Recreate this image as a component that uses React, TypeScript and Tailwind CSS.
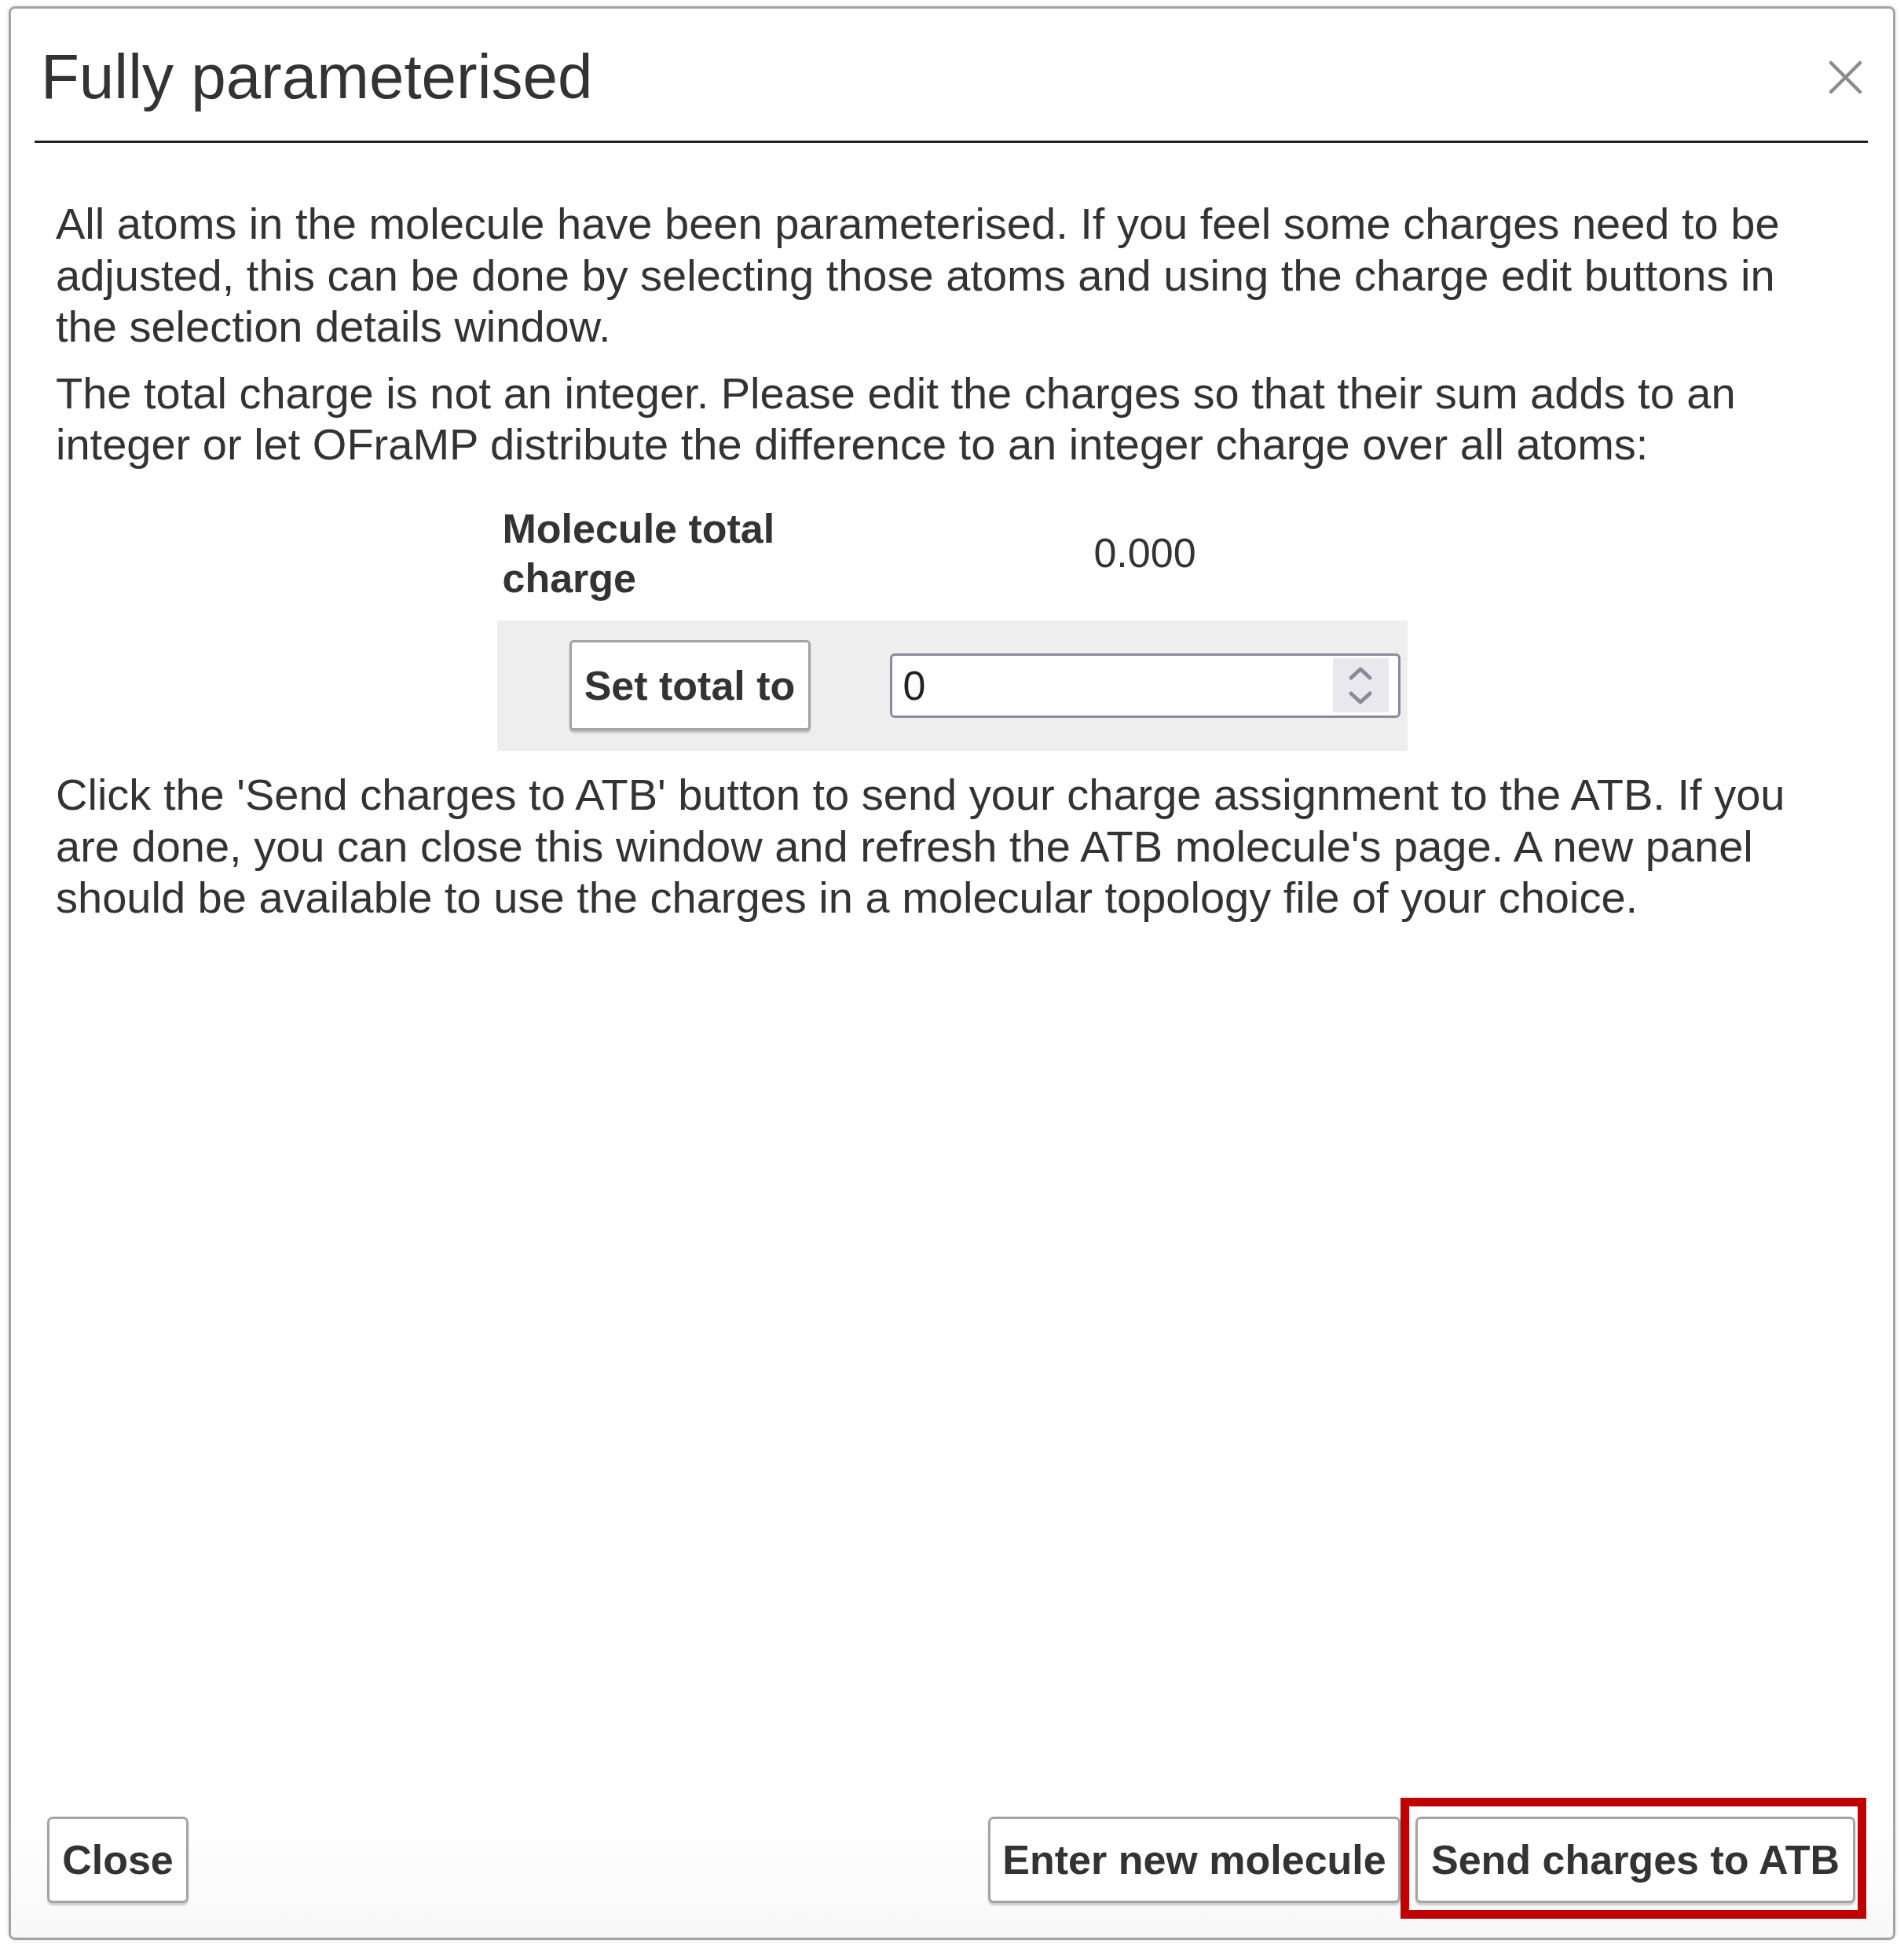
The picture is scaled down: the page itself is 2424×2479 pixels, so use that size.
import { useState } from 'react';

const CloseIcon = () => (
    <svg width="43" height="43" viewBox="0 0 43 43" fill="none">
        <path d="M3 3 L40 40 M40 3 L3 40" stroke="#8c8c8c" strokeWidth="4.5" strokeLinecap="round" />
    </svg>
);

const Spinner = () => (
    <div className="w-[71px] h-[69px] bg-[#e9e9ed] flex items-center justify-center">
        <svg width="32" height="50" viewBox="0 0 32 50" fill="none">
            <path d="M4 15 L16 4 L28 15" stroke="#8a8a9a" strokeWidth="5" strokeLinecap="round" strokeLinejoin="round" />
            <path d="M4 35 L16 46 L28 35" stroke="#8a8a9a" strokeWidth="5" strokeLinecap="round" strokeLinejoin="round" />
        </svg>
    </div>
);

const DialogButton = ({ label, width }: { label: string; width: string }) => (
    <button
        className={`${width} h-[110px] bg-white border-[3px] border-[#a4a4a4] rounded-[7px] shadow-[0_3px_2px_rgba(0,0,0,0.18)] text-[52px] font-bold text-[#333] leading-none whitespace-nowrap flex items-center justify-center`}
    >
        {label}
    </button>
);

export default function App() {
    const [total, setTotal] = useState('0');

    return (
        <div className="w-[2424px] h-[2479px] bg-white pt-[8px] px-[11px] text-[#333] font-['Liberation_Sans',Arial,sans-serif]">
            <div className="h-[2462px] border-[3px] border-[#a3a3a3] rounded-[8px] shadow-[0_0_6px_rgba(0,0,0,0.12)] flex flex-col overflow-hidden">
                {/* title bar */}
                <div className="ml-[30px] mr-[32px] pt-[39px] pb-[33px] border-b-[3px] border-[#222] flex items-center justify-between">
                    <h1 className="pl-[8px] text-[80px] leading-[96px] font-normal text-[#333]">Fully parameterised</h1>
                    <button className="mr-[7px]">
                        <CloseIcon />
                    </button>
                </div>

                {/* body */}
                <div className="pl-[57px] pt-[70px] text-[56px] leading-[65.6px] whitespace-nowrap">
                    <p className="mb-[19px]">
                        All atoms in the molecule have been parameterised. If you feel some charges need to be<br />
                        adjusted, this can be done by selecting those atoms and using the charge edit buttons in<br />
                        the selection details window.
                    </p>
                    <p>
                        The total charge is not an integer. Please edit the charges so that their sum adds to an<br />
                        integer or let OFraMP distribute the difference to an integer charge over all atoms:
                    </p>
                </div>

                <div className="w-[1159px] self-center mt-[36px] text-[52px] leading-[63px]">
                    <div className="grid grid-cols-[491px_668px] items-center pt-[7px] pb-[22px]">
                        <div className="pl-[7px] font-bold">Molecule total<br />charge</div>
                        <div className="text-center">0.000</div>
                    </div>
                    <div className="grid grid-cols-[491px_668px] items-center h-[166px] bg-[#eeeeee]">
                        <div className="flex justify-center">
                            <button className="w-[307px] h-[115px] bg-white border-[3px] border-[#a4a4a4] rounded-[5px] shadow-[0_3px_2px_rgba(0,0,0,0.2)] font-bold text-[52px] leading-none text-[#333]">
                                Set total to
                            </button>
                        </div>
                        <div className="flex justify-center">
                            <div className="w-[650px] h-[82px] bg-white border-[3px] border-[#8a8a9c] rounded-[6px] flex items-center justify-between pl-[14px] pr-[12px]">
                                <input
                                    value={total}
                                    onChange={(e) => setTotal(e.target.value)}
                                    className="w-[400px] bg-transparent outline-none text-[52px] leading-none text-[#222]"
                                />
                                <Spinner />
                            </div>
                        </div>
                    </div>
                </div>

                <div className="pl-[57px] mt-[23px] text-[56px] leading-[65.6px] whitespace-nowrap">
                    <p>
                        Click the 'Send charges to ATB' button to send your charge assignment to the ATB. If you<br />
                        are done, you can close this window and refresh the ATB molecule's page. A new panel<br />
                        should be available to use the charges in a molecular topology file of your choice.
                    </p>
                </div>

                {/* footer */}
                <div className="mt-auto pl-[46px] pr-[48px] pb-[44px] flex items-end justify-between bg-gradient-to-b from-white to-[#f8f8f8]">
                    <DialogButton label="Close" width="w-[180px]" />
                    <div className="flex gap-[19px]">
                        <DialogButton label="Enter new molecule" width="w-[525px]" />
                        <div className="relative">
                            <DialogButton label="Send charges to ATB" width="w-[560px]" />
                            <span className="absolute -left-[19px] -top-[24px] -right-[14px] -bottom-[20px] border-[11px] border-[#c00000] pointer-events-none" />
                        </div>
                    </div>
                </div>
            </div>
        </div>
    );
}
